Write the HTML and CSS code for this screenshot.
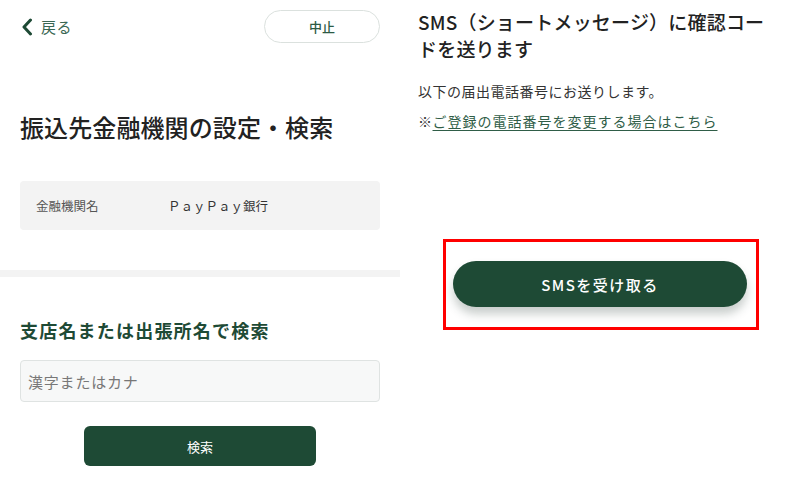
FILE: index.html
```html
<!DOCTYPE html>
<html lang="ja">
<head>
    <meta charset="UTF-8">
    <meta name="viewport" content="width=device-width, initial-scale=1.0">
    <title>振込先金融機関の設定・検索</title>
    <link rel="stylesheet" href="styles.css">
</head>
<body>
    <div class="page">
        <div class="pane pane-left">
            <div class="topbar">
                <a class="back-link" href="#">
                    <svg width="12" height="18" viewBox="0 0 12 18">
                        <path d="M9.5 2 L3 9 L9.5 16" fill="none" stroke="#1e4a35" stroke-width="3" stroke-linecap="round" stroke-linejoin="round"/>
                    </svg>
                    <span>戻る</span>
                </a>
                <button class="cancel-button">中止</button>
            </div>

            <h1 class="page-title">振込先金融機関の設定・検索</h1>

            <div class="info-box">
                <span class="info-label">金融機関名</span>
                <span class="info-value">ＰａｙＰａｙ銀行</span>
            </div>

            <div class="divider"></div>

            <h2 class="section-title">支店名または出張所名で検索</h2>
            <input type="text" class="search-input" placeholder="漢字またはカナ">
            <button class="search-button">検索</button>
        </div>

        <div class="pane pane-right">
            <h2 class="sms-title">SMS（ショートメッセージ）に確認コー<br>ドを送ります</h2>
            <p class="sms-text">以下の届出電話番号にお送りします。</p>
            <p class="sms-text sms-note">※<a href="#">ご登録の電話番号を変更する場合はこちら</a></p>

            <div class="highlight">
                <button class="sms-button">SMSを受け取る</button>
            </div>
        </div>
    </div>
</body>
</html>
```

FILE: styles.css
```css
body {
    margin: 0;
    font-family: "Noto Sans CJK JP", "Noto Sans", sans-serif;
    color: #222;
    background: #fff;
}
.page {
    display: flex;
    width: 800px;
    height: 496px;
    overflow: hidden;
}
.pane {
    width: 400px;
    box-sizing: border-box;
}
.pane-left {
    display: flex;
    flex-direction: column;
}

/* left side */
.topbar {
    display: flex;
    justify-content: space-between;
    align-items: center;
    padding: 10px 20px 0 21px;
}
.back-link {
    display: flex;
    align-items: center;
    gap: 8px;
    color: #3a6753;
    text-decoration: none;
    font-size: 15px;
    letter-spacing: 0.5px;
}
.cancel-button {
    width: 116px;
    height: 33px;
    border: 1px solid #dbe1de;
    border-radius: 17px;
    background: #fff;
    color: #2d5a45;
    font-family: inherit;
    font-size: 13px;
    font-weight: 500;
    padding: 0;
}
.page-title {
    margin: 66px 20px 0;
    font-size: 24px;
    font-weight: 500;
    line-height: 36px;
    color: #222;
    letter-spacing: 0.1px;
}
.info-box {
    display: flex;
    align-items: center;
    margin: 36px 20px 0;
    height: 49px;
    padding: 0 16px;
    background: #f3f3f3;
    border-radius: 4px;
}
.info-label {
    width: 132px;
    font-size: 12.5px;
    color: #555;
}
.info-value {
    font-size: 12.5px;
    color: #333;
}
.divider {
    margin-top: 40px;
    height: 7px;
    background: #f3f3f3;
}
.section-title {
    margin: 40px 20px 0;
    font-size: 18px;
    font-weight: 700;
    line-height: 27px;
    color: #1e4a35;
    letter-spacing: 1.2px;
}
.search-input {
    margin: 16px 20px 0;
    height: 42px;
    box-sizing: border-box;
    padding: 0 7px;
    border: 1px solid #dfe3e2;
    border-radius: 4px;
    background: #f7f8f8;
    font-family: inherit;
    font-size: 15px;
    letter-spacing: 0.8px;
}
.search-input::placeholder {
    color: #777;
}
.search-button {
    align-self: center;
    margin-top: 24px;
    width: 232px;
    height: 40px;
    border: none;
    border-radius: 6px;
    background: #1e4a35;
    color: #fff;
    font-family: inherit;
    font-size: 13px;
}

/* right side */
.pane-right {
    padding: 8px 18px 0;
}
.sms-title {
    margin: 0;
    font-size: 19px;
    font-weight: 500;
    line-height: 27px;
    color: #222;
    letter-spacing: 0.2px;
}
.sms-text {
    margin: 17px 0 0;
    font-size: 14px;
    line-height: 24px;
    letter-spacing: 0.5px;
    color: #333;
}
.sms-note {
    margin-top: 6px;
}
.sms-note a {
    color: #2f5d47;
    letter-spacing: 1px;
    text-decoration: underline;
    text-underline-offset: 3px;
}
.highlight {
    margin: 106px 0 0 25px;
    width: 316px;
    height: 91px;
    box-sizing: border-box;
    border: 3px solid #f00;
    padding: 19px 9px 0 7px;
}
.sms-button {
    width: 294px;
    height: 46px;
    border: none;
    border-radius: 23px;
    background: #1e4a35;
    color: #fff;
    font-family: inherit;
    font-size: 15px;
    font-weight: 500;
    letter-spacing: 1.5px;
    box-shadow: 0 7px 10px rgba(40, 60, 50, 0.25);
}
```
